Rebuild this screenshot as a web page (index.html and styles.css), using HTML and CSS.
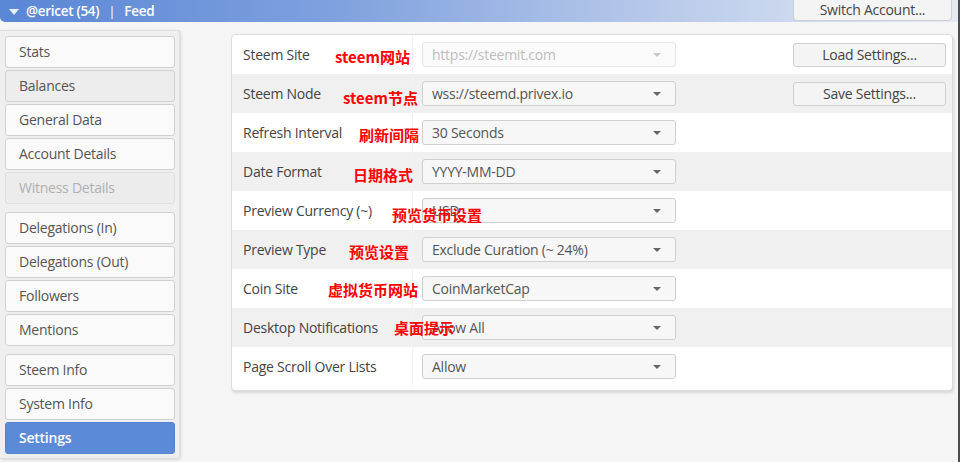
FILE: index.html
```html
<!DOCTYPE html>
<html>
<head>
<meta charset="utf-8">
<link rel="stylesheet" href="styles.css">
</head>
<body>
<div class="app">
  <header class="topbar">
    <div class="account">
      <span class="caret"></span>
      <span class="acct-name">@ericet (54)</span>
      <span class="sep">|</span>
      <span class="acct-feed">Feed</span>
    </div>
    <button class="switch-btn">Switch Account...</button>
  </header>
  <div class="main">
    <nav class="sidebar">
      <div class="group">
        <div class="nav-btn">Stats</div>
        <div class="nav-btn hover">Balances</div>
        <div class="nav-btn">General Data</div>
        <div class="nav-btn">Account Details</div>
        <div class="nav-btn disabled">Witness Details</div>
      </div>
      <div class="group">
        <div class="nav-btn">Delegations (In)</div>
        <div class="nav-btn">Delegations (Out)</div>
        <div class="nav-btn">Followers</div>
        <div class="nav-btn">Mentions</div>
      </div>
      <div class="group">
        <div class="nav-btn">Steem Info</div>
        <div class="nav-btn">System Info</div>
        <div class="nav-btn active">Settings</div>
      </div>
    </nav>
    <section class="settings">
      <div class="row">
        <div class="label">Steem Site</div>
        <div class="field"><div class="select disabled">https://steemit.com<span class="arrow"></span></div></div>
        <div class="action"><button class="act-btn">Load Settings...</button></div>
        <span class="note n1">steem网站</span>
      </div>
      <div class="row alt">
        <div class="label">Steem Node</div>
        <div class="field"><div class="select">wss://steemd.privex.io<span class="arrow"></span></div></div>
        <div class="action"><button class="act-btn">Save Settings...</button></div>
        <span class="note n2">steem节点</span>
      </div>
      <div class="row">
        <div class="label">Refresh Interval</div>
        <div class="field"><div class="select">30 Seconds<span class="arrow"></span></div></div>
        <span class="note n3">刷新间隔</span>
      </div>
      <div class="row alt">
        <div class="label">Date Format</div>
        <div class="field"><div class="select">YYYY-MM-DD<span class="arrow"></span></div></div>
        <span class="note n4">日期格式</span>
      </div>
      <div class="row">
        <div class="label">Preview Currency (~)</div>
        <div class="field"><div class="select">USD<span class="arrow"></span></div></div>
        <span class="note n5">预览货币设置</span>
      </div>
      <div class="row alt">
        <div class="label">Preview Type</div>
        <div class="field"><div class="select">Exclude Curation (~ 24%)<span class="arrow"></span></div></div>
        <span class="note n6">预览设置</span>
      </div>
      <div class="row">
        <div class="label">Coin Site</div>
        <div class="field"><div class="select">CoinMarketCap<span class="arrow"></span></div></div>
        <span class="note n7">虚拟货币网站</span>
      </div>
      <div class="row alt">
        <div class="label">Desktop Notifications</div>
        <div class="field"><div class="select">Allow All<span class="arrow"></span></div></div>
        <span class="note n8">桌面提示</span>
      </div>
      <div class="row">
        <div class="label">Page Scroll Over Lists</div>
        <div class="field"><div class="select">Allow<span class="arrow"></span></div></div>
      </div>
    </section>
  </div>
</div>
</body>
</html>
```
FILE: styles.css
```css
* { box-sizing: border-box; }
html, body { margin: 0; padding: 0; }
body {
  background: #f5f5f5;
  font-family: "Open Sans", "Noto Sans", sans-serif;
  font-size: 14px;
  letter-spacing: -0.25px;
  color: #555;
}
.app {
  width: 960px;
  height: 462px;
  border-right: 2px solid #4d4d4d;
  overflow: hidden;
}
.topbar {
  height: 22px;
  display: flex;
  justify-content: space-between;
  align-items: flex-start;
  background: linear-gradient(to right, #5986d5 0%, #7fa1de 35%, #b7c9ea 68%, #e4eaf3 100%);
  border-bottom-left-radius: 5px;
}
.account {
  display: flex;
  align-items: center;
  height: 22px;
  padding-left: 9px;
  color: #fff;
  font-weight: 600;
  font-size: 13.5px;
  letter-spacing: -0.3px;
}
.caret {
  width: 0; height: 0;
  border-left: 5px solid transparent;
  border-right: 5px solid transparent;
  border-top: 6px solid #e8eef8;
  margin-right: 7px;
  margin-top: 1px;
}
.sep { margin: 0 9px 0 9px; font-weight: 400; }
.switch-btn {
  margin-right: 6px;
  width: 159px;
  height: 21px;
  background: #f4f4f4;
  border: 1px solid #cfcfcf;
  border-top: none;
  border-radius: 0 0 4px 4px;
  font-family: inherit;
  font-size: 14px;
  letter-spacing: -0.25px;
  color: #444;
  padding: 0 0 2px;
}
.main {
  display: flex;
  align-items: flex-start;
  padding-top: 8px;
}
.sidebar {
  width: 180px;
  background: #efefef;
  border: 1px solid #dedede;
  border-left: none;
  border-radius: 0 3px 3px 0;
  box-shadow: 1px 1px 3px rgba(0,0,0,0.12);
  padding: 5px 4px 4px 5px;
  display: flex;
  flex-direction: column;
  gap: 8px;
}
.group { display: flex; flex-direction: column; gap: 2px; }
.nav-btn {
  height: 32px;
  line-height: 30px;
  padding-left: 13px;
  background: #fafafa;
  border: 1px solid #d0d0d0;
  border-radius: 3px;
  color: #555;
  font-size: 14px;
}
.nav-btn.hover { background: #ededed; }
.nav-btn.disabled { background: #ececec; color: #b0b0b0; border-color: #e0e0e0; }
.nav-btn.active {
  background: #5b8bd8;
  border-color: #5283d2;
  color: #fff;
  font-weight: 600;
}
.settings {
  margin-left: 51px;
  margin-top: 4px;
  width: 722px;
  background: #fff;
  border: 1px solid #dcdcdc;
  border-radius: 4px;
  box-shadow: 1px 2px 3px rgba(0,0,0,0.12);
  padding: 0 0 4px;
}
.row {
  position: relative;
  height: 39px;
  display: flex;
  align-items: center;
}
.row.alt { background: #f0f0f0; }
.label {
  width: 181px;
  height: 100%;
  display: flex;
  align-items: center;
  padding-left: 11px;
  border-right: 1px solid #f2f2f2;
  color: #444;
}
.field { padding-left: 9px; }
.select {
  position: relative;
  width: 254px;
  height: 25px;
  line-height: 23px;
  padding-left: 9px;
  background: #f7f7f7;
  border: 1px solid #cfcfcf;
  border-radius: 3px;
  color: #555;
}
.select.disabled {
  background: #fafafa;
  border-color: #e6e6e6;
  color: #bdbdbd;
}
.arrow {
  position: absolute;
  right: 14px;
  top: 10px;
  width: 0; height: 0;
  border-left: 4px solid transparent;
  border-right: 4px solid transparent;
  border-top: 4px solid #666;
}
.select.disabled .arrow { border-top-color: #c8c8c8; }
.action { margin-left: auto; margin-right: 6px; }
.act-btn {
  width: 153px;
  height: 24px;
  background: #f4f4f4;
  border: 1px solid #cfcfcf;
  border-radius: 3px;
  font-family: inherit;
  font-size: 14px;
  letter-spacing: -0.25px;
  color: #444;
  padding: 0 0 1px;
}
.note {
  position: absolute;
  color: #ff0000;
  font-family: "Noto Sans CJK SC", "Noto Sans", sans-serif;
  font-weight: 700;
  font-size: 15px;
  line-height: 18px;
  letter-spacing: 0;
  white-space: nowrap;
}
.n1 { left: 103px; top: 13px; }
.n2 { left: 111px; top: 15px; }
.n3 { left: 127px; top: 13px; }
.n4 { left: 121px; top: 14px; }
.n5 { left: 160px; top: 15px; }
.n6 { left: 117px; top: 13px; }
.n7 { left: 96px; top: 12px; }
.n8 { left: 162px; top: 11px; }
```
